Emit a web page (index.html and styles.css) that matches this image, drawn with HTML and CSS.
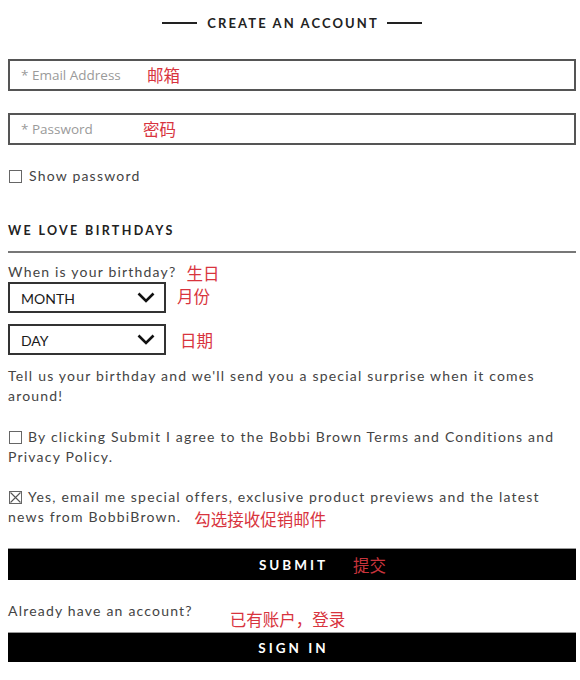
FILE: index.html
```html
<!DOCTYPE html>
<html lang="en">
<head>
<meta charset="utf-8">
<title>Create an account</title>
<link rel="stylesheet" href="styles.css">
</head>
<body>
<div class="page">
  <h1 class="title"><span class="rule"></span><span class="title-text">CREATE AN ACCOUNT</span><span class="rule"></span></h1>

  <div class="field"><span class="ph ph-email">* Email Address</span><span class="note">邮箱</span></div>
  <div class="field field-pw"><span class="ph ph-pw">* Password</span><span class="note">密码</span></div>

  <div class="check-row"><span class="box"></span><span>Show password</span></div>

  <h2 class="section">WE LOVE BIRTHDAYS</h2>

  <p class="question">When is your birthday?<span class="note note-q">生日</span></p>

  <div class="select-row">
    <div class="select"><span>MONTH</span><svg class="chev" width="18" height="11" viewBox="0 0 18 11"><polyline points="1.5,1.5 9,9 16.5,1.5" fill="none" stroke="#111" stroke-width="2.6"/></svg></div>
    <span class="note note-sel">月份</span>
  </div>
  <div class="select-row select-row-day">
    <div class="select"><span>DAY</span><svg class="chev" width="18" height="11" viewBox="0 0 18 11"><polyline points="1.5,1.5 9,9 16.5,1.5" fill="none" stroke="#111" stroke-width="2.6"/></svg></div>
    <span class="note note-day">日期</span>
  </div>

  <p class="copy copy-first">Tell us your birthday and we'll send you a special surprise when it comes around!</p>

  <p class="copy"><span class="box box-inline"></span>By clicking Submit I agree to the Bobbi Brown Terms and Conditions and Privacy Policy.</p>

  <p class="copy copy-offer"><span class="box box-inline box-x"><svg width="11" height="11" viewBox="0 0 11 11"><path d="M0.5 0.5 L10.5 10.5 M10.5 0.5 L0.5 10.5" stroke="#555" stroke-width="1.1"/></svg></span>Yes, email me special offers, exclusive product previews and the latest news from BobbiBrown.<span class="note note-offer">勾选接收促销邮件</span></p>

  <div class="btn btn-submit"><span></span><span class="btn-label">SUBMIT</span><span class="note note-btn">提交</span></div>

  <div class="signin-row"><span class="already">Already have an account?</span><span class="note note-signin">已有账户，登录</span></div>

  <div class="btn btn-signin"><span></span><span class="btn-label">SIGN IN</span><span></span></div>
</div>
</body>
</html>
```

FILE: styles.css
```css
* {
  box-sizing: border-box;
}

body {
  margin: 0;
  background: #fff;
  font-family: Lato, "Noto Sans CJK SC", sans-serif;
  color: #444;
}

.page {
  padding: 14px 4px 0 8px;
}

.note {
  font-family: "Noto Sans CJK SC", sans-serif;
  font-size: 16.5px;
  color: #d8343e;
  letter-spacing: 0;
  font-weight: 400;
}

.title {
  margin: 0;
  display: flex;
  justify-content: center;
  align-items: center;
  gap: 10px;
  font-size: 13px;
  font-weight: 700;
  color: #222;
  line-height: 18px;
}

.title-text {
  letter-spacing: 2.1px;
  margin-right: -2.1px;
}

.rule {
  width: 35px;
  height: 2px;
  background: #222;
}

.field {
  margin-top: 27px;
  height: 32px;
  border: 2px solid #555;
  display: flex;
  align-items: center;
  padding-left: 11px;
}

.field-pw {
  margin-top: 22px;
}

.ph {
  font-family: "Open Sans", sans-serif;
  font-size: 13.5px;
  color: #9a9a9a;
}

.ph-email {
  width: 126px;
}

.ph-pw {
  width: 122px;
}

.check-row {
  margin-top: 21px;
  display: flex;
  align-items: center;
  line-height: 20px;
  font-size: 14px;
  letter-spacing: 1.2px;
  color: #444;
}

.box {
  display: inline-block;
  width: 13px;
  height: 13px;
  border: 1px solid #666;
  margin: 0 7px 0 1px;
  flex: none;
}

.box-inline {
  vertical-align: -2px;
  margin-right: 6px;
}

.box-x svg {
  display: block;
}

.section {
  margin: 35px 0 0;
  padding-bottom: 10px;
  border-bottom: 2px solid #777;
  font-size: 12.5px;
  line-height: 20px;
  font-weight: 700;
  letter-spacing: 2.35px;
  color: #222;
}

.question {
  margin: 9px 0 0;
  height: 20px;
  line-height: 20px;
  font-size: 14px;
  letter-spacing: 1.2px;
}

.note-q {
  margin-left: 10px;
  vertical-align: -3px;
  line-height: 14px;
}

.select-row {
  display: flex;
  align-items: center;
  gap: 11px;
}

.select-row-day {
  margin-top: 11px;
  gap: 14px;
}

.select {
  width: 158px;
  height: 31px;
  border: 2px solid #333;
  display: flex;
  align-items: center;
  justify-content: space-between;
  padding: 2px 9px 0 11px;
  font-size: 14px;
  color: #1a1a1a;
}

.chev {
  display: block;
  margin-top: -2px;
}

.note-sel {
  margin-top: -4px;
}

.copy {
  margin: 21px 0 0;
  line-height: 20px;
  font-size: 14px;
  letter-spacing: 1.2px;
  color: #444;
  padding-right: 4px;
}

.copy-first {
  margin-top: 11px;
  padding-right: 20px;
}

.copy-offer {
  margin-top: 20px;
  padding-right: 20px;
}

.note-offer {
  margin-left: 13px;
  vertical-align: -4px;
  line-height: 14px;
}

.btn {
  margin-top: 21px;
  background: #000;
  border-top: 1px solid #999;
  display: grid;
  grid-template-columns: 1fr auto 1fr;
  align-items: center;
  color: #fff;
}

.btn-submit {
  height: 32px;
}

.btn-label {
  font-size: 13.5px;
  font-weight: 700;
  letter-spacing: 3px;
  margin-right: -3px;
}

.note-btn {
  justify-self: start;
  margin-left: 28px;
  color: #c8343c;
  line-height: 14px;
}

.signin-row {
  margin-top: 21px;
  display: flex;
  align-items: flex-start;
  height: 28px;
}

.already {
  line-height: 20px;
  font-size: 14px;
  letter-spacing: 1.2px;
  color: #444;
}

.note-signin {
  margin-left: 37px;
  margin-top: 8px;
  line-height: 20px;
}

.btn-signin {
  margin-top: 3px;
  height: 30px;
}
```
